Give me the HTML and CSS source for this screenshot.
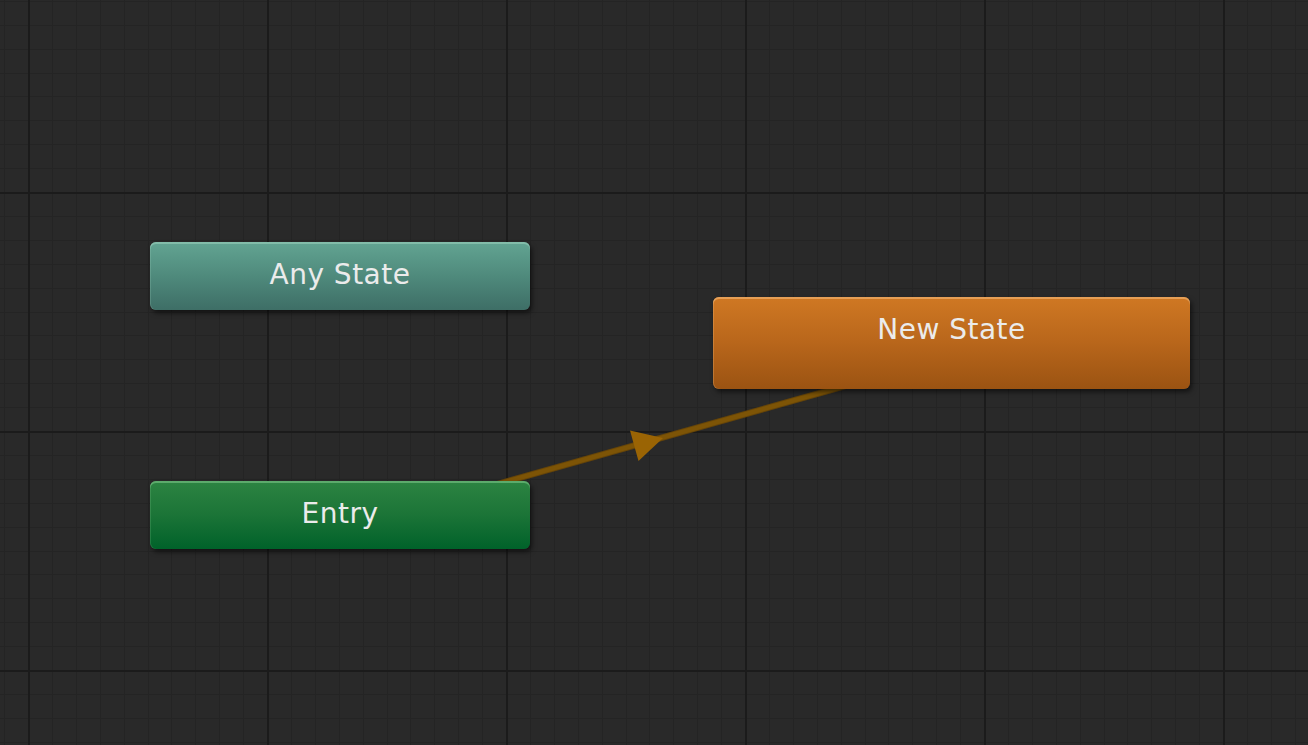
FILE: index.html
```html
<!DOCTYPE html>
<html>
<head>
<meta charset="utf-8">
<link rel="stylesheet" href="styles.css">
</head>
<body>
<div class="canvas">
  <svg class="grid" width="1308" height="745" xmlns="http://www.w3.org/2000/svg">
    <defs>
      <pattern id="g" patternUnits="userSpaceOnUse" x="28" y="192" width="239" height="239">
        <g fill="#242424" shape-rendering="crispEdges">
          <rect x="23.9" y="0" width="1" height="239"/>
          <rect x="47.8" y="0" width="1" height="239"/>
          <rect x="71.7" y="0" width="1" height="239"/>
          <rect x="95.6" y="0" width="1" height="239"/>
          <rect x="119.5" y="0" width="1" height="239"/>
          <rect x="143.4" y="0" width="1" height="239"/>
          <rect x="167.3" y="0" width="1" height="239"/>
          <rect x="191.2" y="0" width="1" height="239"/>
          <rect x="215.1" y="0" width="1" height="239"/>
          <rect y="23.9" x="0" height="1" width="239"/>
          <rect y="47.8" x="0" height="1" width="239"/>
          <rect y="71.7" x="0" height="1" width="239"/>
          <rect y="95.6" x="0" height="1" width="239"/>
          <rect y="119.5" x="0" height="1" width="239"/>
          <rect y="143.4" x="0" height="1" width="239"/>
          <rect y="167.3" x="0" height="1" width="239"/>
          <rect y="191.2" x="0" height="1" width="239"/>
          <rect y="215.1" x="0" height="1" width="239"/>
        </g>
        <g fill="#1b1b1b" shape-rendering="crispEdges">
          <rect x="0" y="0" width="2" height="239"/>
          <rect x="0" y="0" width="239" height="2"/>
        </g>
      </pattern>
    </defs>
    <rect width="1308" height="745" fill="#292929"/>
    <rect width="1308" height="745" fill="url(#g)"/>
    <line x1="400" y1="511.6" x2="950" y2="356.4" stroke="#664509" stroke-width="6.5"/>
    <line x1="400" y1="511.6" x2="950" y2="356.4" stroke="#7d5406" stroke-width="4.5"/>
    <polygon points="663,438 630,430.5 638.5,461" fill="#9a6404"/>
  </svg>

  <div class="node node-any"><span class="label">Any State</span></div>
  <div class="node node-entry"><span class="label">Entry</span></div>
  <div class="node node-new"><span class="label">New State</span></div>
</div>
</body>
</html>
```

FILE: styles.css
```css
html, body {
  margin: 0;
  padding: 0;
  background: #292929;
  overflow: hidden;
}

.canvas {
  position: relative;
  width: 1308px;
  height: 745px;
  overflow: hidden;
  font-family: "DejaVu Sans", Verdana, sans-serif;
}

.grid {
  position: absolute;
  left: 0;
  top: 0;
  display: block;
}

.node {
  position: absolute;
  box-sizing: border-box;
  border-radius: 6px;
  padding-top: 19px;
  text-align: center;
  color: #ebebeb;
  font-size: 28px;
  line-height: 28px;
  letter-spacing: 0.5px;
}

.node-any {
  left: 150px;
  top: 242px;
  width: 380px;
  height: 68px;
  background: linear-gradient(to bottom, #62a492 0%, #4f8a7c 50%, #3e6e66 100%);
  box-shadow: inset 0 2px 0 rgba(170, 220, 200, 0.45), inset 1px 0 0 rgba(170, 220, 200, 0.2), 2px 3px 5px rgba(0, 0, 0, 0.55);
}

.node-entry {
  left: 150px;
  top: 481px;
  width: 380px;
  height: 68px;
  background: linear-gradient(to bottom, #2c8442 0%, #1b7437 50%, #00622a 100%);
  box-shadow: inset 0 2px 0 rgba(140, 210, 150, 0.5), inset 1px 0 0 rgba(140, 210, 150, 0.2), 2px 3px 5px rgba(0, 0, 0, 0.55);
}

.node-new {
  left: 713px;
  top: 297px;
  width: 477px;
  height: 92px;
  background: linear-gradient(to bottom, #cf7823 0%, #b8661b 50%, #9b5312 100%);
  box-shadow: inset 0 2px 0 rgba(245, 185, 120, 0.6), inset 1px 0 0 rgba(245, 185, 120, 0.3), 2px 3px 5px rgba(0, 0, 0, 0.55);
}

.label {
  white-space: nowrap;
}
```
